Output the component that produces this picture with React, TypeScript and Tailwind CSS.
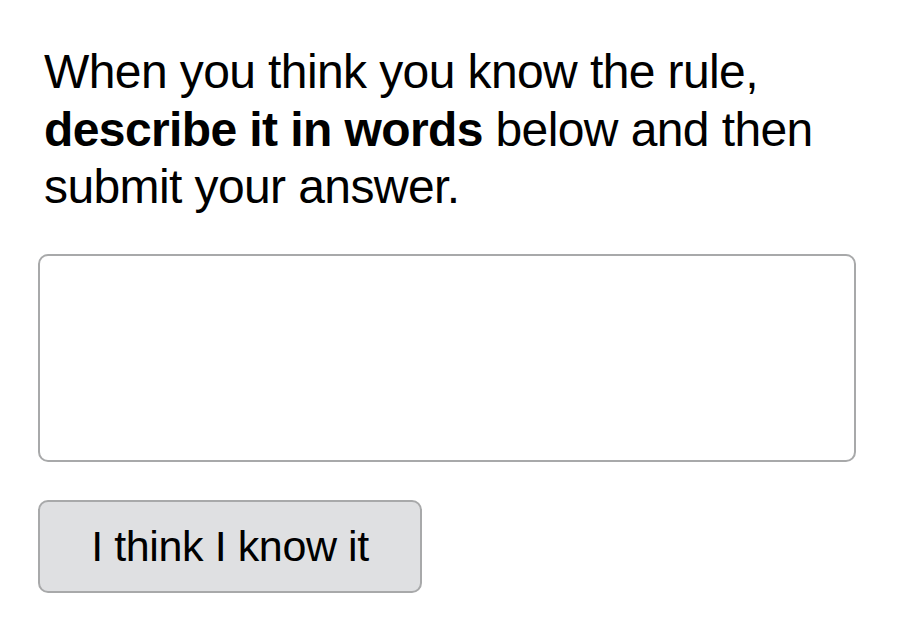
export default function App() {
  return (
    <div className="min-h-screen bg-white px-[38px] pt-[43px] font-['Helvetica_Neue','Liberation_Sans',Arial,sans-serif] text-black">
      <p className="pl-[6px] text-[48px] leading-[57.6px] tracking-[-0.6px]">
        When you think you know the rule, <b className="font-bold">describe it in words</b> below and then submit your answer.
      </p>
      <textarea className="mt-[38px] block h-[208px] w-[818px] resize-none rounded-[10px] border-2 border-[#a8a9aa] bg-white p-3 text-[24px] outline-none" />
      <button className="mt-[38px] flex h-[93px] w-[384px] items-center justify-center rounded-[10px] border-2 border-[#a8a9aa] bg-[#dfe0e2] text-[43px] leading-none tracking-[-0.4px]">
        I think I know it
      </button>
    </div>
  );
}
